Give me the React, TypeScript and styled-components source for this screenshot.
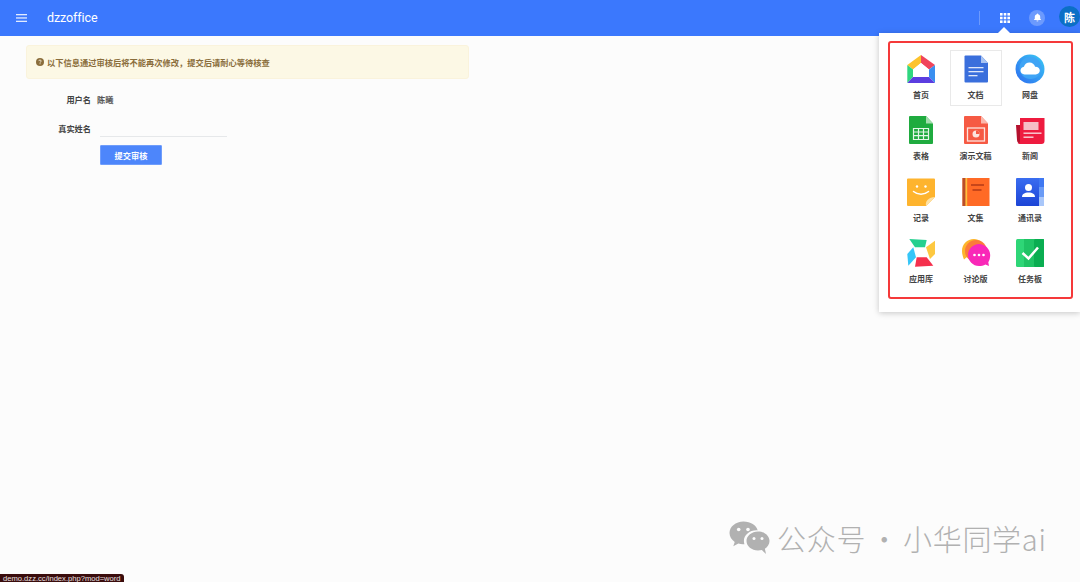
import React from "react";
import styled, { createGlobalStyle } from "styled-components";

const CJK = `"Noto Sans CJK SC", "Noto Sans", sans-serif`;

const GlobalStyle = createGlobalStyle`
    html, body {
        margin: 0;
        padding: 0;
        height: 100%;
        background: #fcfcfc;
        overflow: hidden;
    }
    #root {
        height: 100%;
    }
    * {
        box-sizing: border-box;
    }
`;

const Page = styled.div`
    position: relative;
    width: 1080px;
    height: 582px;
    overflow: hidden;
    font-family: ${CJK};
`;

const Header = styled.header`
    height: 36px;
    background: #3b78fd;
    display: flex;
    align-items: center;
    padding-left: 16px;
    color: #fff;
`;

const Logo = styled.div`
    margin-left: 20px;
    margin-top: -1px;
    font-family: Roboto, sans-serif;
    font-size: 12.5px;
    letter-spacing: -0.1px;
    color: #fff;
`;

const HeaderRight = styled.div`
    margin-left: auto;
    display: flex;
    align-items: center;
    margin-top: -1px;
`;

const Divider = styled.div`
    width: 1px;
    height: 14px;
    background: rgba(255, 255, 255, 0.25);
    margin-right: 20px;
`;

const BellButton = styled.div`
    width: 16px;
    height: 16px;
    border-radius: 50%;
    background: rgba(255, 255, 255, 0.25);
    display: flex;
    align-items: center;
    justify-content: center;
    margin-left: 19px;
`;

const Avatar = styled.div`
    width: 21px;
    height: 21px;
    border-radius: 50%;
    background: #0b6fc6;
    color: #fff;
    font-size: 11px;
    font-weight: 700;
    display: flex;
    align-items: center;
    justify-content: center;
    margin-left: 14px;
    margin-top: -2px;
`;

const Main = styled.main`
    padding: 9px 0 0 26px;
`;

const Alert = styled.div`
    width: 443px;
    height: 34px;
    background: #fcf8e5;
    border: 1px solid #faf3dc;
    border-radius: 3px;
    display: flex;
    align-items: center;
    gap: 3px;
    padding-left: 9px;
    color: #8a6d3b;
    font-size: 8.25px;
    font-weight: 700;
`;

const Form = styled.div`
    margin-top: 13px;
    display: flex;
    flex-direction: column;
    gap: 15px;
`;

const FormRow = styled.div`
    display: flex;
    align-items: center;
    height: 14px;
`;

const Label = styled.div`
    width: 65px;
    text-align: right;
    font-size: 8.2px;
    font-weight: 700;
    color: #444;
`;

const Value = styled.div`
    margin-left: 6px;
    font-size: 8.2px;
    font-weight: 700;
    color: #555;
`;

const InputLine = styled.div`
    margin-left: 9px;
    width: 127px;
    height: 15px;
    margin-top: 3px;
    border-bottom: 1px solid #e6e8ea;
`;

const SubmitRow = styled.div`
    margin: 10px 0 0 74px;
`;

const SubmitButton = styled.button`
    display: block;
    width: 62px;
    height: 20px;
    padding: 0;
    border: 1px solid #6f9dfb;
    border-radius: 1px;
    background: #4d86fb;
    color: #fff;
    font-family: ${CJK};
    font-size: 8.2px;
    font-weight: 700;
`;

const Panel = styled.div`
    position: absolute;
    top: 33px;
    left: 879px;
    width: 201px;
    height: 279px;
    background: #fff;
    box-shadow: 0 1px 6px rgba(0, 0, 0, 0.22);
    padding: 17px 0 0 16px;

    &::before {
        content: "";
        position: absolute;
        top: -6px;
        left: 119px;
        border-left: 6px solid transparent;
        border-right: 6px solid transparent;
        border-bottom: 6px solid #fff;
    }
`;

const AppGrid = styled.div`
    display: grid;
    grid-template-columns: repeat(3, 52px);
    grid-auto-rows: 56px;
    column-gap: 2.5px;
    row-gap: 5.33px;
`;

const AppCell = styled.div<{ $active?: boolean }>`
    display: flex;
    flex-direction: column;
    align-items: center;
    padding-top: 3px;
    border: 1px solid ${(p) => (p.$active ? "#e9e9e9" : "transparent")};

    svg {
        display: block;
    }
`;

const AppLabel = styled.div`
    margin-top: 4px;
    font-size: 8px;
    line-height: 13px;
    font-weight: 700;
    color: #444;
    white-space: nowrap;
`;

const Annotation = styled.div`
    position: absolute;
    top: 41px;
    left: 888px;
    width: 185px;
    height: 258px;
    border: 2px solid #f5393a;
    border-radius: 3px;
    pointer-events: none;
`;

const Watermark = styled.div`
    position: absolute;
    left: 729px;
    top: 519px;
    display: flex;
    align-items: center;
    color: #b1b1b1;
`;

const WatermarkText = styled.div`
    margin-left: 7px;
    font-size: 29px;
    line-height: 38px;
    font-weight: 300;
    letter-spacing: 0.7px;
    word-spacing: -3.5px;
    white-space: nowrap;
    font-family: ${CJK};
`;

const StatusTip = styled.div`
    position: absolute;
    left: 0;
    bottom: 0;
    width: 124px;
    height: 8px;
    background: #3a0c0c;
    border-top-right-radius: 3px;
    color: #e8e0e0;
    font-family: "Liberation Sans", sans-serif;
    font-size: 7.6px;
    line-height: 9px;
    padding-left: 3px;
    white-space: nowrap;
`;

const MenuIcon = () => (
    <svg width="11" height="8" viewBox="0 0 11 8">
        <rect y="0" width="11" height="1.3" fill="#fff" opacity="0.85" />
        <rect y="3.3" width="11" height="1.3" fill="#fff" opacity="0.85" />
        <rect y="6.7" width="11" height="1.3" fill="#fff" opacity="0.85" />
    </svg>
);

const GridIcon = () => (
    <svg width="10" height="10" viewBox="0 0 10 10" fill="#fff">
        {[0, 3.7, 7.4].map((y) =>
            [0, 3.7, 7.4].map((x) => (
                <rect key={`${x}-${y}`} x={x} y={y} width="2.6" height="2.6" />
            ))
        )}
    </svg>
);

const BellIcon = () => (
    <svg width="9" height="9" viewBox="0 0 10 10" fill="#fff">
        <path d="M5 0.6c.5 0 .8.3.8.8 1.5.4 2.2 1.6 2.2 3v2l1 1.1v.4H1v-.4l1-1.1v-2c0-1.4.7-2.6 2.2-3 0-.5.3-.8.8-.8z" />
        <path d="M3.9 8.4h2.2c0 .6-.5 1-1.1 1s-1.1-.4-1.1-1z" />
    </svg>
);

const QuestionIcon = () => (
    <svg width="8" height="8" viewBox="0 0 8 8">
        <circle cx="4" cy="4" r="4" fill="#8a6d3b" />
        <path d="M2.8 3.1c0-.7.5-1.1 1.2-1.1s1.2.4 1.2 1c0 .9-1.1.9-1.1 1.7" fill="none" stroke="#fcf8e5" strokeWidth="0.8" />
        <rect x="3.6" y="5.3" width="0.9" height="0.9" fill="#fcf8e5" />
    </svg>
);

const WeChatIcon = () => (
    <svg width="41" height="35" viewBox="0 0 41 35" fill="#b1b1b1">
        <path d="M14.5 0.5C6.7 0.5 0.5 5.700 0.5 12c0 3.600 2 6.700 5.200 8.900L4.300 25.200l5-2.600c1.500.4 3 .7 4.700.7.500 0 1 0 1.400-.1-.3-1-.5-2-.5-3.100 0-6 5.600-10.800 12.600-10.800.4 0 .8 0 1.200.1C27.400 4.300 21.500.5 14.500.5z" />
        <path d="M40.500 20c0-5.200-5.200-9.500-11.500-9.500S17.500 14.800 17.500 20s5.200 9.500 11.500 9.500c1.300 0 2.600-.2 3.800-.5l4.200 4-1.100-5.200c2.800-2 4.600-4.800 4.600-7.800z" />
        <circle cx="9.700" cy="8.500" r="1.800" fill="#fcfcfc" />
        <circle cx="19" cy="8.500" r="1.800" fill="#fcfcfc" />
        <circle cx="25" cy="17.500" r="1.500" fill="#fcfcfc" />
        <circle cx="33" cy="17.500" r="1.500" fill="#fcfcfc" />
    </svg>
);

const HomeIcon = () => (
    <svg width="30" height="30" viewBox="0 0 30 30">
        <path d="M15 1L1.300 11 7 15.500 15 9z" fill="#fdc32c" />
        <path d="M15 1l14 10-6 4.500L15 9z" fill="#f0445a" />
        <path d="M1.300 11V29L7 23V15.500z" fill="#2fd67f" />
        <path d="M29 11v18l-6-6v-7.500z" fill="#3a8ff0" />
        <path d="M1.300 29L7 23h16l6 6z" fill="#5b3de0" />
        <path d="M15 9l8 6.500V23H7v-7.500z" fill="#fff" />
    </svg>
);

const DocIcon = () => (
    <svg width="30" height="30" viewBox="0 0 30 30">
        <path d="M4.500 1.500h15.500l7 7.500v18.500a1 1 0 0 1-1 1H4.500a1 1 0 0 1-1-1v-25a1 1 0 0 1 1-1z" fill="#3a6fdc" />
        <path d="M20 1.500l7 7.500h-7z" fill="#a9c4f2" />
        <rect x="7.500" y="13" width="15" height="1.300" fill="#dfe8fa" />
        <rect x="7.500" y="17" width="15" height="1.300" fill="#dfe8fa" />
        <rect x="7.500" y="21" width="9" height="1.300" fill="#dfe8fa" />
    </svg>
);

const CloudIcon = () => (
    <svg width="30" height="30" viewBox="0 0 30 30">
        <defs>
            <linearGradient id="cloudRing" x1="0" y1="1" x2="1" y2="0">
                <stop offset="0" stopColor="#2d6cf0" />
                <stop offset="1" stopColor="#39c9f4" />
            </linearGradient>
        </defs>
        <circle cx="15" cy="15" r="14.500" fill="url(#cloudRing)" />
        <circle cx="15.500" cy="14" r="11" fill="#3fa4f5" />
        <path d="M9.500 20.500c-2.300 0-4-1.700-4-3.900 0-2 1.400-3.600 3.400-3.900.8-2.600 3-4.200 5.600-4.200 2.700 0 4.900 1.700 5.600 4.200 2.500-.2 4.700 1.500 4.700 3.900 0 2.200-1.800 3.900-4.100 3.900z" fill="#fff" />
    </svg>
);

const SheetIcon = () => (
    <svg width="30" height="30" viewBox="0 0 30 30">
        <path d="M4 1h16l7 7.500V28a1 1 0 0 1-1 1H4a1 1 0 0 1-1-1V2a1 1 0 0 1 1-1z" fill="#1fab3f" />
        <path d="M20 1l7 7.500h-7z" fill="#a5dcae" />
        <path d="M7.500 13.500h15v11h-15zM7.500 17h15M7.500 20.700h15M12.500 13.500v11M17.500 13.500v11" fill="none" stroke="#e4f6e8" strokeWidth="1.200" />
    </svg>
);

const SlideIcon = () => (
    <svg width="30" height="30" viewBox="0 0 30 30">
        <path d="M4 1h16l7 7.500V28a1 1 0 0 1-1 1H4a1 1 0 0 1-1-1V2a1 1 0 0 1 1-1z" fill="#f65a44" />
        <path d="M20 1l7 7.500h-7z" fill="#fbb8ac" />
        <rect x="6.500" y="13" width="17" height="13" fill="none" stroke="#fde3dd" strokeWidth="1.300" />
        <circle cx="15" cy="19" r="3.500" fill="#fde3dd" />
        <path d="M15 19v-3.500a3.500 3.500 0 0 1 3.500 3.500z" fill="#f65a44" />
    </svg>
);

const NewsIcon = () => (
    <svg width="30" height="30" viewBox="0 0 30 30">
        <path d="M1 10h5v19c-2.500 0-4-2-4-4z" fill="#b5112e" />
        <path d="M5 3h24.500v23a3 3 0 0 1-3 3H2.500c1.500-.5 2.500-1.500 2.500-3z" fill="#ee1b3f" />
        <rect x="8.500" y="7" width="15" height="8" fill="#f6bcc6" />
        <rect x="8.500" y="17.500" width="18" height="1.400" fill="#f9d3da" />
        <rect x="8.500" y="21.500" width="10" height="1.400" fill="#f9d3da" />
    </svg>
);

const NoteIcon = () => (
    <svg width="30" height="30" viewBox="0 0 30 30">
        <path d="M2 1.500h26a1 1 0 0 1 1 1V20L20 29H2a1 1 0 0 1-1-1V2.500a1 1 0 0 1 1-1z" fill="#feb42e" />
        <path d="M29 20l-9 9c-.5-2.500 0-4.500 1.500-6 1.800-2 4.500-3 7.500-3z" fill="#fde2a6" />
        <circle cx="11" cy="9.500" r="1.200" fill="#fff" />
        <circle cx="19.500" cy="9.500" r="1.200" fill="#fff" />
        <path d="M7.500 14.500c4 3.500 11 3.500 15 0" fill="none" stroke="#fff" strokeWidth="1.500" strokeLinecap="round" />
    </svg>
);

const BookIcon = () => (
    <svg width="30" height="30" viewBox="0 0 30 30">
        <rect x="1.500" y="1" width="27" height="28" fill="#ff6a26" />
        <rect x="1.500" y="1" width="3" height="28" fill="#b84f2a" />
        <rect x="4.500" y="1" width="1.700" height="28" fill="#fdc23f" />
        <rect x="10" y="7" width="13" height="2" fill="#c7461a" />
        <rect x="11.500" y="12" width="9" height="2" fill="#c7461a" />
    </svg>
);

const ContactIcon = () => (
    <svg width="30" height="30" viewBox="0 0 30 30">
        <defs>
            <linearGradient id="contactBody" x1="0" y1="0" x2="0" y2="1">
                <stop offset="0" stopColor="#3a6df0" />
                <stop offset="1" stopColor="#1c44d6" />
            </linearGradient>
        </defs>
        <path d="M2 1h24v28H2a1 1 0 0 1-1-1V2a1 1 0 0 1 1-1z" fill="url(#contactBody)" />
        <rect x="24" y="1" width="5" height="9" fill="#3f78f2" />
        <rect x="24" y="10" width="5" height="10" fill="#6a9bf6" />
        <rect x="24" y="20" width="5" height="9" fill="#a9c7fa" />
        <circle cx="13.500" cy="10.500" r="3.500" fill="#fff" />
        <path d="M7 20c0-3 2.500-4.500 6.500-4.500S20 17 20 20z" fill="#fff" />
    </svg>
);

const AppStoreIcon = () => (
    <svg width="30" height="30" viewBox="0 0 30 30">
        <path d="M3.300 1L20.700 2 19 9.300H9z" fill="#25d08f" />
        <path d="M29 2.700V16l-5 5-4-11.700z" fill="#fdc840" />
        <path d="M1.300 16l6-6.700 2.700 10-7.700 8.400z" fill="#35c6f8" />
        <path d="M10.700 19.300h10l6.600 8.400L9 28.700z" fill="#f5304d" />
    </svg>
);

const ForumIcon = () => (
    <svg width="30" height="30" viewBox="0 0 30 30">
        <path d="M13 1C6 1 1 6 1 13c0 3 .8 5.500 2 8.500L6 19C6 12 10 7 14 7c5 0 8 1 10 3-1.500-5.500-5.500-9-11-9z" fill="#fdb52b" />
        <circle cx="15" cy="13" r="11" fill="#fb7b3a" />
        <path d="M18 6C12 6 7 11 7 17s5 11 11 11c2.400 0 4.500-.5 6.400-1.500L28 28l-.7-3.700c1.200-2 1.900-4.500 1.900-7.300C29.200 11 24 6 18 6z" fill="#f928b8" />
        <circle cx="13.500" cy="17" r="1.300" fill="#fff" />
        <circle cx="18" cy="17" r="1.300" fill="#fff" />
        <circle cx="22.500" cy="17" r="1.300" fill="#fff" />
    </svg>
);

const TaskIcon = () => (
    <svg width="30" height="30" viewBox="0 0 30 30">
        <rect x="1" y="1" width="28" height="28" rx="1.500" fill="#2ed677" />
        <rect x="9" y="1" width="20" height="28" fill="#1fc365" />
        <rect x="19" y="1" width="10" height="28" rx="1.500" fill="#0aad51" />
        <path d="M7.500 15l6 5.500L23 9.500" fill="none" stroke="#fff" strokeWidth="2.500" />
    </svg>
);

const apps = [
    { label: "首页", icon: <HomeIcon /> },
    { label: "文档", icon: <DocIcon />, active: true },
    { label: "网盘", icon: <CloudIcon /> },
    { label: "表格", icon: <SheetIcon /> },
    { label: "演示文稿", icon: <SlideIcon /> },
    { label: "新闻", icon: <NewsIcon /> },
    { label: "记录", icon: <NoteIcon /> },
    { label: "文集", icon: <BookIcon /> },
    { label: "通讯录", icon: <ContactIcon /> },
    { label: "应用库", icon: <AppStoreIcon /> },
    { label: "讨论版", icon: <ForumIcon /> },
    { label: "任务板", icon: <TaskIcon /> },
];

const App = () => {
    return (
        <Page>
            <GlobalStyle />
            <Header>
                <MenuIcon />
                <Logo>dzzoffice</Logo>
                <HeaderRight>
                    <Divider />
                    <GridIcon />
                    <BellButton>
                        <BellIcon />
                    </BellButton>
                    <Avatar>陈</Avatar>
                </HeaderRight>
            </Header>
            <Main>
                <Alert>
                    <QuestionIcon />
                    以下信息通过审核后将不能再次修改，提交后请耐心等待核查
                </Alert>
                <Form>
                    <FormRow>
                        <Label>用户名</Label>
                        <Value>陈曦</Value>
                    </FormRow>
                    <FormRow>
                        <Label>真实姓名</Label>
                        <InputLine />
                    </FormRow>
                </Form>
                <SubmitRow>
                    <SubmitButton>提交审核</SubmitButton>
                </SubmitRow>
            </Main>
            <Panel>
                <AppGrid>
                    {apps.map((app) => (
                        <AppCell key={app.label} $active={app.active}>
                            {app.icon}
                            <AppLabel>{app.label}</AppLabel>
                        </AppCell>
                    ))}
                </AppGrid>
            </Panel>
            <Annotation />
            <Watermark>
                <WeChatIcon />
                <WatermarkText>公众号 · 小华同学ai</WatermarkText>
            </Watermark>
            <StatusTip>demo.dzz.cc/index.php?mod=word</StatusTip>
        </Page>
    );
};

export default App;
